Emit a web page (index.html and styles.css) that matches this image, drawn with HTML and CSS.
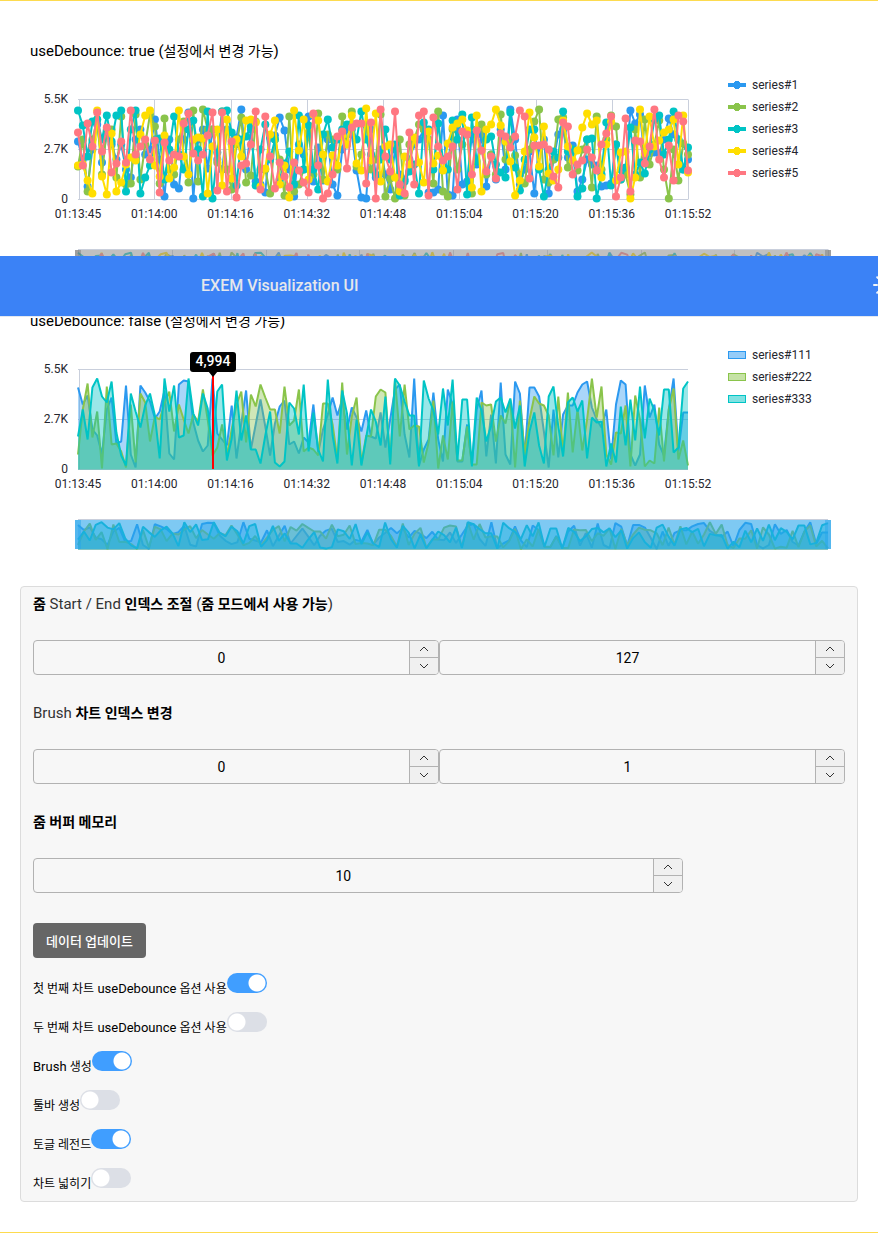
FILE: index.html
```html
<!DOCTYPE html>
<html lang="ko">
<head>
<meta charset="utf-8">
<title>EXEM Visualization UI</title>
<link rel="stylesheet" href="styles.css">
</head>
<body>
<header class="topbar">
  <span class="brand">EXEM Visualization UI</span>
  <button class="theme" type="button" aria-label="Theme">
    <svg width="24" height="24" viewBox="0 0 24 24" fill="none" stroke="currentColor" stroke-width="2" stroke-linecap="round"><circle cx="12" cy="12" r="5"/><path d="M12 1v2M12 21v2M1 12h3M20 12h3M4.2 4.2l.8.8M19 19l.8.8M4.2 19.8l.8-.8M19 5l.8-.8"/></svg>
  </button>
</header>
<main class="example">
  <section class="chart">
    <h3 class="chart-title"><span class="latin">useDebounce: true (</span>설정에서 변경 가능<span class="latin">)</span></h3>
    <div class="chart-body">
      <svg class="plot" id="plot1"></svg>
      <div class="legend">
        <button type="button" class="legend-item c1"><span class="mark-line"></span>series#1</button>
        <button type="button" class="legend-item c2"><span class="mark-line"></span>series#2</button>
        <button type="button" class="legend-item c3"><span class="mark-line"></span>series#3</button>
        <button type="button" class="legend-item c4"><span class="mark-line"></span>series#4</button>
        <button type="button" class="legend-item c5"><span class="mark-line"></span>series#5</button>
      </div>
    </div>
    <svg class="brush" id="brush1"></svg>
  </section>
  <section class="chart">
    <h3 class="chart-title"><span class="latin">useDebounce: false (</span>설정에서 변경 가능<span class="latin">)</span></h3>
    <div class="chart-body">
      <svg class="plot" id="plot2"></svg>
      <div class="legend">
        <button type="button" class="legend-item c1"><span class="mark-area"></span>series#111</button>
        <button type="button" class="legend-item c2"><span class="mark-area"></span>series#222</button>
        <button type="button" class="legend-item c3"><span class="mark-area"></span>series#333</button>
      </div>
    </div>
    <svg class="brush" id="brush2"></svg>
  </section>

  <section class="panel">
    <h4 class="panel-title">줌<span class="latin"> Start / End </span>인덱스 조절<span class="latin"> (</span>줌 모드에서 사용 가능<span class="latin">)</span></h4>
    <div class="fields">
      <div class="number"><input type="text" value="0" aria-label="줌 Start"><div class="steps"><button type="button" aria-label="증가"><svg class="chev" viewBox="0 0 10 6"><path d="M1 5l4-4 4 4"/></svg></button><button type="button" aria-label="감소"><svg class="chev" viewBox="0 0 10 6"><path d="M1 1l4 4 4-4"/></svg></button></div></div>
      <div class="number"><input type="text" value="127" aria-label="줌 End"><div class="steps"><button type="button" aria-label="증가"><svg class="chev" viewBox="0 0 10 6"><path d="M1 5l4-4 4 4"/></svg></button><button type="button" aria-label="감소"><svg class="chev" viewBox="0 0 10 6"><path d="M1 1l4 4 4-4"/></svg></button></div></div>
    </div>
    <h4 class="panel-title"><span class="latin">Brush </span>차트 인덱스 변경</h4>
    <div class="fields">
      <div class="number"><input type="text" value="0" aria-label="Brush 차트 시작"><div class="steps"><button type="button" aria-label="증가"><svg class="chev" viewBox="0 0 10 6"><path d="M1 5l4-4 4 4"/></svg></button><button type="button" aria-label="감소"><svg class="chev" viewBox="0 0 10 6"><path d="M1 1l4 4 4-4"/></svg></button></div></div>
      <div class="number"><input type="text" value="1" aria-label="Brush 차트 끝"><div class="steps"><button type="button" aria-label="증가"><svg class="chev" viewBox="0 0 10 6"><path d="M1 5l4-4 4 4"/></svg></button><button type="button" aria-label="감소"><svg class="chev" viewBox="0 0 10 6"><path d="M1 1l4 4 4-4"/></svg></button></div></div>
    </div>
    <h4 class="panel-title">줌 버퍼 메모리</h4>
    <div class="fields fields-short">
      <div class="number"><input type="text" value="10" aria-label="줌 버퍼 메모리"><div class="steps"><button type="button" aria-label="증가"><svg class="chev" viewBox="0 0 10 6"><path d="M1 5l4-4 4 4"/></svg></button><button type="button" aria-label="감소"><svg class="chev" viewBox="0 0 10 6"><path d="M1 1l4 4 4-4"/></svg></button></div></div>
    </div>
    <button type="button" class="update">데이터 업데이트</button>
    <div class="toggles">
      <div class="toggle"><label for="t1">첫 번째 차트<span class="latin"> useDebounce </span>옵션 사용</label><input type="checkbox" id="t1" checked></div>
      <div class="toggle"><label for="t2">두 번째 차트<span class="latin"> useDebounce </span>옵션 사용</label><input type="checkbox" id="t2"></div>
      <div class="toggle"><label for="t3"><span class="latin">Brush </span>생성</label><input type="checkbox" id="t3" checked></div>
      <div class="toggle"><label for="t4">툴바 생성</label><input type="checkbox" id="t4"></div>
      <div class="toggle"><label for="t5">토글 레전드</label><input type="checkbox" id="t5" checked></div>
      <div class="toggle"><label for="t6">차트 넓히기</label><input type="checkbox" id="t6"></div>
    </div>
  </section>
</main>
<script src="charts.js"></script>
</body>
</html>
```

FILE: charts.js
```js
// Sample values, as a percentage of the 5.5K axis maximum.
const lineData = [
  [58,40,13,50,75,37,65,55,40,55,30,22,60,70,45,50,80,40,3,60,15,11,60,87,1,60,70,31,70,40,30,70,55,62,90,30,70,18,15,7,62,64,82,69,30,3,55,45,83,18,52,19,60,15,4,50,70,65,29,2,1,70,22,50,25,10,50,25,20,40,55,60,70,7,7,10,84,5,4,80,15,18,65,35,65,13,45,20,70,30,90,60,15,30,48,6,52,60,6,40,65,70,42,54,8,20,40,35,34,13,14,16,55,30,30,89,76,85,40,46,47,46,60,81,65,60,30,40],
  [33,60,8,60,80,25,70,70,22,83,15,16,85,20,55,85,73,16,81,30,25,60,78,17,89,18,90,70,70,37,88,30,10,55,82,17,24,78,30,30,6,60,40,4,83,8,15,30,67,25,86,20,65,60,30,83,55,88,33,45,75,30,40,85,3,21,1,60,4,55,60,75,70,60,16,88,8,3,70,30,55,68,6,70,75,25,45,25,85,40,60,44,25,16,50,78,90,20,17,40,80,82,32,50,29,50,60,12,83,30,60,84,73,20,25,5,70,22,80,35,55,79,30,1,50,19,56,45],
  [89,74,43,78,80,60,84,58,84,89,8,70,89,6,22,34,60,61,20,50,83,45,30,70,79,50,3,88,1,47,88,89,67,14,60,63,73,14,50,75,40,60,20,36,48,15,84,30,74,30,10,65,80,52,60,70,75,70,60,88,60,45,25,40,70,40,55,4,18,28,35,6,77,70,30,76,40,30,79,60,85,5,82,38,50,60,63,35,27,22,87,32,9,40,70,70,30,3,30,48,42,88,48,50,3,11,60,61,1,25,77,14,55,20,32,72,25,37,26,50,80,84,45,60,88,60,30,52],
  [34,35,19,6,89,23,5,66,8,17,35,42,39,65,84,89,34,23,64,21,32,89,43,25,60,62,61,6,53,70,14,80,21,60,43,79,80,77,13,31,65,79,15,34,2,89,49,80,20,85,79,45,18,44,34,64,55,84,36,29,91,39,86,18,53,55,22,8,43,35,62,37,17,68,36,44,29,56,72,76,80,69,12,84,8,70,75,90,74,58,38,4,19,48,87,62,33,73,26,19,30,79,53,39,49,72,86,75,79,22,55,78,19,47,48,1,22,90,46,83,53,59,67,70,80,35,84,27],
  [67,34,76,53,87,48,72,27,36,58,37,89,45,53,60,40,59,7,57,39,45,43,76,86,46,39,45,64,87,9,87,8,58,2,34,36,55,88,10,83,43,11,37,23,12,37,29,17,7,86,34,1,6,25,63,68,31,72,76,76,16,77,1,90,43,28,88,15,6,67,15,84,88,4,82,53,39,43,53,10,68,65,25,69,49,28,43,21,66,63,52,63,89,83,21,54,54,55,50,23,12,77,73,25,35,39,50,42,29,55,66,83,3,22,81,8,59,58,36,53,90,40,22,54,19,84,78,29]
];
const areaData = [
  [82,65,74,40,34,15,60,72,26,28,84,15,2,84,77,68,51,58,79,16,10,85,89,88,47,29,18,24,91,36,30,24,64,11,46,79,20,45,70,43,14,46,63,69,25,28,16,32,27,65,17,40,55,72,54,70,40,62,52,38,59,33,31,57,22,50,80,85,35,12,91,4,20,30,77,30,8,80,65,8,8,45,5,60,79,13,55,6,87,15,5,88,76,12,82,82,73,38,2,60,12,55,64,64,77,85,88,62,50,42,60,10,65,89,85,15,4,15,84,52,65,25,14,60,91,18,57,57],
  [15,60,86,32,58,1,83,25,26,18,2,65,7,76,67,28,53,50,66,78,38,65,50,36,55,48,80,50,14,22,45,14,40,65,78,27,75,63,85,72,60,60,36,83,44,49,80,18,22,20,14,66,66,45,10,87,15,53,72,6,34,33,73,80,77,8,90,33,85,40,44,43,7,27,69,1,34,10,68,9,9,43,5,5,67,64,65,28,54,46,70,2,69,15,50,73,66,64,54,14,73,16,77,17,60,19,50,91,52,83,15,5,37,36,64,3,74,50,3,9,6,62,8,60,81,10,29,4],
  [33,60,30,82,91,73,67,88,37,14,4,76,58,42,64,76,54,11,91,58,84,32,34,91,56,44,76,61,20,78,85,9,31,79,29,54,20,20,6,34,58,7,3,8,67,61,35,85,18,57,20,8,90,34,6,79,56,4,50,4,32,60,48,24,73,5,91,84,68,54,54,3,89,71,59,35,81,44,90,9,70,70,3,72,59,28,44,68,72,57,71,41,64,3,38,57,24,6,73,83,43,13,67,72,58,69,11,52,47,48,3,26,7,63,24,70,29,83,31,71,59,34,80,80,17,22,81,88]
];
const colors = ['#2b99f0', '#8ac44b', '#00c4c5', '#ffde00', '#ff7781'];
const times = ['01:13:45', '01:14:00', '01:14:16', '01:14:32', '01:14:48', '01:15:04', '01:15:20', '01:15:36', '01:15:52'];
const GRID = '#c9cfdc';

const line = (x1, y1, x2, y2, color) =>
  `<line x1="${x1}" y1="${y1}" x2="${x2}" y2="${y2}" stroke="${color}"/>`;
const snap = (v) => Math.round(v) + 0.5;

function drawSeries(data, box, filled, dots) {
  return data.map((values, s) => {
    const pts = values.map((v, i) => [
      box.left + (box.right - box.left) * i / (values.length - 1),
      box.bottom - (box.bottom - box.top) * v / 100
    ]);
    const path = pts.map((p) => p[0].toFixed(1) + ',' + p[1].toFixed(1)).join(' ');
    let out = '';
    if (filled) {
      out += `<polygon points="${box.left},${box.bottom} ${path} ${box.right},${box.bottom}" fill="${colors[s]}" fill-opacity="0.4"/>`;
    }
    out += `<polyline points="${path}" fill="none" stroke="${colors[s]}" stroke-width="2" stroke-linejoin="bevel"/>`;
    if (dots) {
      out += pts.map((p) => `<circle cx="${p[0].toFixed(1)}" cy="${p[1].toFixed(1)}" r="4" fill="${colors[s]}"/>`).join('');
    }
    return out;
  }).join('');
}

function drawPlot(id, data, filled) {
  const svg = document.getElementById(id);
  const box = { left: 48, right: svg.clientWidth - 30, top: 29.5, bottom: 129.5 };
  const step = (box.right - box.left) / (times.length - 1);
  let out = '';
  [0, 0.5, 1].forEach((k) => {
    const y = snap(box.top + k * 100 - 0.5);
    out += line(box.left, y, box.right, y, GRID);
    out += `<text x="38" y="${y + 3}" text-anchor="end">${['5.5K', '2.7K', '0'][k * 2]}</text>`;
  });
  times.forEach((t, i) => {
    const x = box.left + i * step;
    if (!filled || i === 0) out += line(snap(x) + (i ? 0 : 1), box.top, snap(x) + (i ? 0 : 1), box.bottom, GRID);
    out += `<text x="${x}" y="148" text-anchor="middle">${t}</text>`;
  });
  out += drawSeries(data, box, filled, !filled);
  if (filled) {
    const x = Math.ceil(box.left + (box.right - box.left) * 28 / 127);
    out += `<line x1="${x}" y1="36" x2="${x}" y2="129" stroke="#ff0000" stroke-width="2"/>`;
    out += `<path d="M${x - 5} 31h10l-5 6z"/><rect x="${x - 23}" y="12" width="46" height="20" rx="3"/>`;
    out += `<text class="tip" x="${x}" y="26" text-anchor="middle">4,994</text>`;
  }
  svg.innerHTML = out;
}

function drawBrush(id, data, filled) {
  const svg = document.getElementById(id);
  const box = { left: 48, right: svg.clientWidth - 20, top: 9.5, bottom: 39.5 };
  const step = (box.right - box.left) / (times.length - 1);
  let out = line(box.left, 9.5, box.right, 9.5, GRID) + line(box.left, 39.5, box.right, 39.5, GRID);
  if (!filled) times.forEach((t, i) => { const x = snap(box.left + i * step); out += line(x, box.top, x, box.bottom, GRID); });
  out += drawSeries(data, box, filled, false);
  const tone = filled ? 'brush-blue' : 'brush-gray';
  out += `<rect class="${tone}" x="${box.left - 3}" y="10" width="${box.right - box.left + 6}" height="29"/>`;
  out += `<rect class="${tone}-handle" x="${box.left - 3}" y="10" width="6" height="29"/>`;
  out += `<rect class="${tone}-handle" x="${box.right - 3}" y="10" width="6" height="29"/>`;
  svg.innerHTML = out;
}

function drawAll() {
  drawPlot('plot1', lineData, false);
  drawBrush('brush1', lineData, false);
  drawPlot('plot2', areaData, true);
  drawBrush('brush2', areaData, true);
}

drawAll();
window.addEventListener('resize', drawAll);
```

FILE: styles.css
```css
* { box-sizing: border-box; }

body {
  margin: 0;
  background: #fff;
  color: #000;
  font-family: Roboto, "Noto Sans CJK KR", sans-serif;
  font-size: 14px;
}

button, input { font: inherit; color: inherit; margin: 0; }

/* Bar floating over the scrolled page */
.topbar {
  position: absolute;
  top: 256px;
  left: 0;
  right: 0;
  z-index: 2;
  height: 61px;
  padding: 0 0 2px 201px;
  display: flex;
  align-items: center;
  justify-content: space-between;
  overflow: hidden;
  background: #3b82f6;
  border-bottom: 1px solid #e2e8f0;
  color: #e5e7eb;
}

.brand { font-size: 16px; font-weight: 500; }

.theme {
  margin-right: -19px;
  padding: 0;
  display: flex;
  border: 0;
  background: none;
  color: #f1f5f9;
}

.example {
  padding: 40px 20px 30px;
  border-top: 1px solid #fddb4f;
  border-bottom: 1px solid #fddb4f;
}

.chart { padding: 0 10px; margin-bottom: 31px; }

.chart-title {
  margin: 0 0 9px;
  font-size: 14px;
  font-weight: 400;
  line-height: 20px;
  height: 20px;
}

.latin { font-size: 15px; }

.chart-body { display: flex; gap: 10px; }

.plot {
  flex: 1;
  min-width: 0;
  height: 160px;
  font-size: 12px;
  fill: #25262e;
}

.plot .tip { font-size: 14px; font-weight: 500; fill: #fff; }
.plot path, .plot rect { fill: #000; }

.legend {
  flex: 0 0 120px;
  padding-top: 4px;
  display: flex;
  flex-direction: column;
}

.legend-item {
  height: 22px;
  padding: 0;
  display: flex;
  align-items: center;
  gap: 6px;
  border: 0;
  background: none;
  color: #25262e;
  font-size: 12px;
}

.c1 { --c: #2b99f0; --f: #95ccf8; }
.c2 { --c: #8ac44b; --f: #c5e2a5; }
.c3 { --c: #00c4c5; --f: #80e2e2; }
.c4 { --c: #ffde00; }
.c5 { --c: #ff7781; }

.mark-line {
  width: 18px;
  height: 8px;
  background:
    radial-gradient(circle, var(--c) 4px, transparent 4px),
    linear-gradient(var(--c), var(--c)) center / 18px 4px no-repeat;
}

.mark-area {
  width: 18px;
  height: 8px;
  border: 1px solid var(--c);
  background: var(--f);
}

.brush { display: block; width: 100%; height: 40px; margin-top: 10px; }
.brush-gray { fill: rgba(146, 146, 146, 0.58); }
.brush-gray-handle { fill: rgba(110, 110, 110, 0.4); }
.brush-blue { fill: rgba(40, 165, 235, 0.6); }
.brush-blue-handle { fill: rgba(40, 165, 235, 0.5); }

.panel {
  margin-top: 36px;
  padding: 0 12px 7px;
  border: 1px solid #dcdcdc;
  border-radius: 4px;
  background: #f7f7f7;
}

.panel-title {
  margin: 0 0 18px;
  height: 35px;
  font-size: 14px;
  font-weight: 700;
  line-height: 35px;
}

.panel-title .latin { font-weight: 400; color: #333; }

.fields { display: flex; margin-bottom: 21px; }
.fields-short { width: 80%; margin-bottom: 30px; }

.number {
  flex: 1;
  height: 35px;
  display: flex;
  overflow: hidden;
  border: 1px solid #b2b2b2;
  border-radius: 4px;
}

.number input {
  flex: 1;
  min-width: 0;
  padding: 0;
  border: 0;
  background: none;
  text-align: center;
}

.steps {
  width: 29px;
  display: flex;
  flex-direction: column;
  border-left: 1px solid #b2b2b2;
  background: #f0f0f0;
}

.steps button {
  flex: 1;
  padding: 0;
  display: flex;
  align-items: center;
  justify-content: center;
  border: 0;
  background: none;
}

.steps button + button { border-top: 1px solid #b2b2b2; }

.chev { width: 10px; height: 6px; fill: none; stroke: #333; }

.update {
  height: 35px;
  padding: 0 13px;
  display: block;
  border: 0;
  border-radius: 4px;
  background: #666;
  color: #fff;
  font-size: 13px;
  font-weight: 500;
}

.toggles {
  margin-top: 15px;
  display: flex;
  flex-direction: column;
  gap: 13px;
}

.toggle { display: flex; align-items: flex-start; height: 26px; }

.toggle label {
  padding-top: 6px;
  font-size: 12px;
  line-height: 20px;
}

.toggle .latin { font-size: 13px; }

.toggle input {
  appearance: none;
  width: 40px;
  height: 20px;
  border-radius: 10px;
  background: radial-gradient(circle at 10px 10px, #fff 8px, transparent 9px) #dcdfe6;
}

.toggle input:checked {
  background: radial-gradient(circle at 30px 10px, #fff 8px, transparent 9px) #409eff;
}
```
